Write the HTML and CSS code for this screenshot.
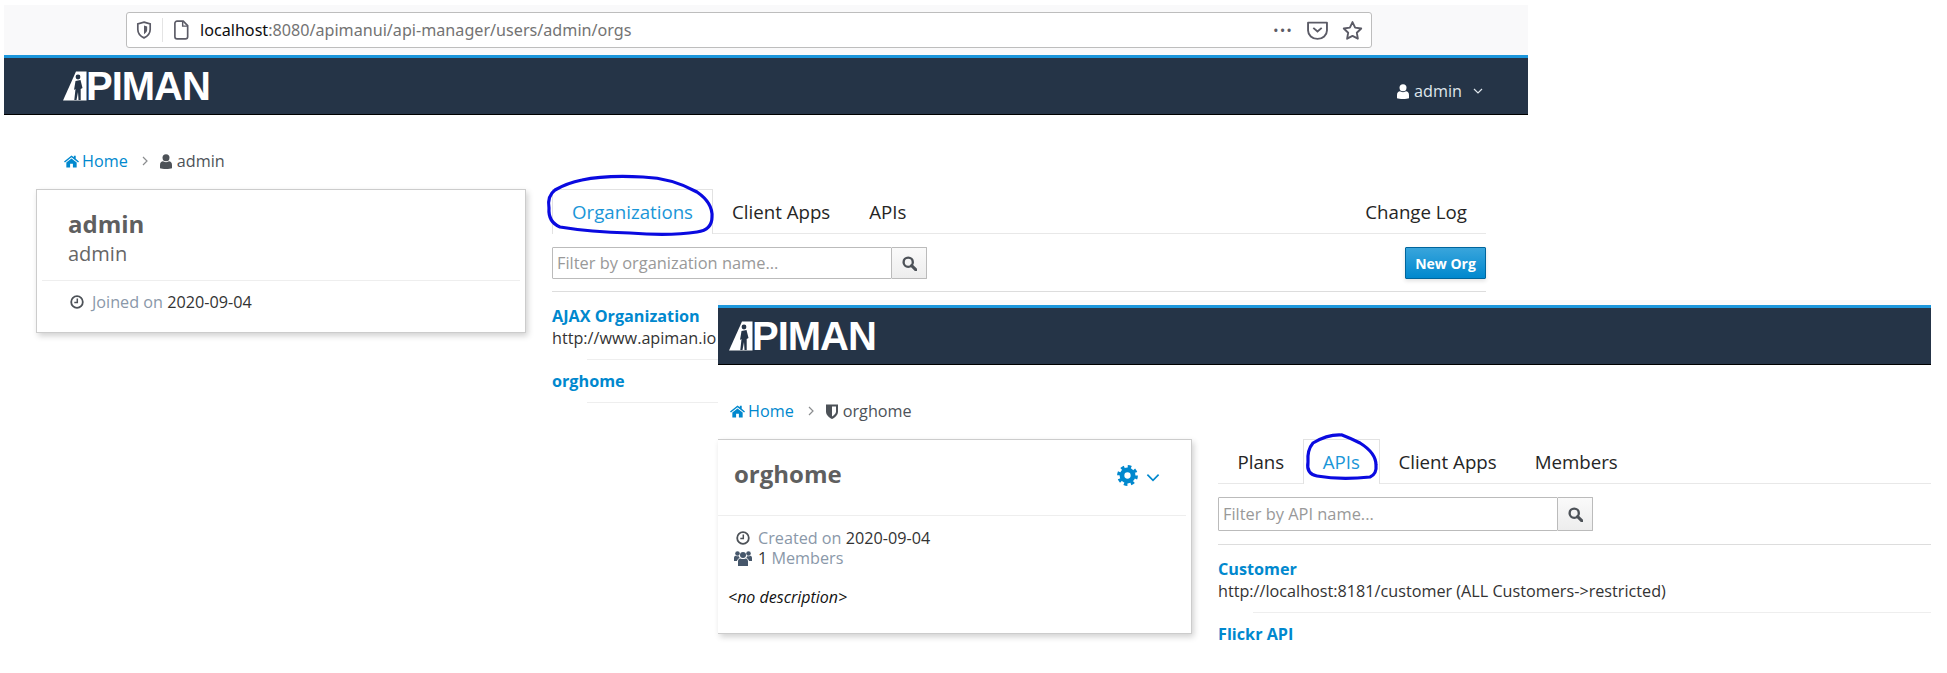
FILE: index.html
```html
<!DOCTYPE html>
<html lang="en">
<head>
  <meta charset="UTF-8" />
  <title>Apiman screenshots</title>
  <link rel="stylesheet" href="styles.css">
</head>
<body>

  <!-- icons -->
  <svg class="sprite" xmlns="http://www.w3.org/2000/svg">
    <symbol id="i-home" viewBox="0 0 16 14">
      <path d="M8 1L0 7.5l1 1.1L8 3l7 5.6 1-1.1-3.5-2.9V1.500h-2V3z"/>
      <path d="M2.500 8.700L8 4.200l5.500 4.500V14h-4v-4h-3v4h-4z"/>
    </symbol>
    <symbol id="i-user" viewBox="0 0 12 15">
      <circle cx="6" cy="3.700" r="3.500"/>
      <path d="M0 14.200V11c0-2.500 1.500-3.700 3-3.700 1 1.100 5 1.100 6 0 1.500 0 3 1.200 3 3.700v3.200c-2 1-10 1-12 0z"/>
    </symbol>
    <symbol id="i-clock" viewBox="0 0 14 14">
      <circle cx="7" cy="7" r="5.800" fill="none" stroke="currentColor" stroke-width="1.800"/>
      <path d="M7.300 3.500v4H4.300" fill="none" stroke="currentColor" stroke-width="1.500"/>
    </symbol>
    <symbol id="i-search" viewBox="0 0 14 14">
      <circle cx="5.800" cy="5.800" r="4.300" fill="none" stroke="currentColor" stroke-width="2.200"/>
      <path d="M9 9l4 4" fill="none" stroke="currentColor" stroke-width="2.800" stroke-linecap="round"/>
    </symbol>
    <symbol id="i-gear" viewBox="0 0 22 22">
      <circle cx="11" cy="11" r="5.800" fill="none" stroke="currentColor" stroke-width="5"/>
      <circle cx="11" cy="11" r="9.300" fill="none" stroke="currentColor" stroke-width="3.200" stroke-dasharray="3.700 3.600"/>
    </symbol>
    <symbol id="i-users" viewBox="0 0 18 16">
      <circle cx="9" cy="5" r="3"/>
      <circle cx="3.500" cy="3.500" r="2.300"/>
      <circle cx="14.500" cy="3.500" r="2.300"/>
      <path d="M4 16v-4.500C4 9.500 5 8.500 6.500 8.500c1 .8 4 .8 5 0 1.500 0 2.500 1 2.500 3V16z"/>
      <path d="M0 11V8c0-1.500 1-2.300 1.800-2.300.9.700 2.400.7 3 .4 0 .9.400 1.300 1 1.800C4 8.500 3 10 3 11z"/>
      <path d="M18 11V8c0-1.500-1-2.300-1.800-2.300-.9.700-2.400.7-3 .4 0 .9-.4 1.300-1 1.800C14 8.500 15 10 15 11z"/>
    </symbol>
    <symbol id="i-org" viewBox="0 0 12 15">
      <path d="M0 .5h12v7c0 3.500-3 6-6 7.500-3-1.500-6-4-6-7.500z"/>
      <path d="M6 2.500h4v5c0 2.200-2 3.800-4 5z" fill="#fff"/>
    </symbol>
    <symbol id="i-down" viewBox="0 0 10 6">
      <path d="M1 1l4 4 4-4" fill="none" stroke="currentColor" stroke-width="1.200"/>
    </symbol>
    <symbol id="i-right" viewBox="0 0 6 10">
      <path d="M1 1l4 4-4 4" fill="none" stroke="currentColor" stroke-width="1.200"/>
    </symbol>
    <symbol id="i-wedge" viewBox="0 0 24 30">
      <path d="M0 29.500L13 .5h10.500v29z" fill="#fff"/>
      <circle cx="15" cy="6" r="2.400" fill="#253447"/>
      <path d="M12.500 10l5-1 2 8-1.800 1v11h-2.200l-.5-8-1.500 8h-2.200l1.200-11-1.500 1z" fill="#253447"/>
    </symbol>
  </svg>

  <div class="canvas">

    <!-- first screenshot: user page -->
    <section class="shot shot-user">
      <div class="browser-bar">
        <div class="url-box">
          <svg class="url-shield" viewBox="0 0 14 16"><path d="M7 1l5.500 1.500v5c0 3.500-2.500 6-5.500 7.500-3-1.500-5.500-4-5.500-7.500v-5z" fill="none" stroke="#5b5b66" stroke-width="1.500"/><path d="M7 4l2.800.8v3c0 1.800-1.300 3-2.800 4z" fill="#5b5b66"/></svg>
          <span class="url-sep"></span>
          <svg class="url-page" viewBox="0 0 14 18"><path d="M1.500 3a2 2 0 012-2H9l4 4v10a2 2 0 01-2 2H3.500a2 2 0 01-2-2z" fill="none" stroke="#5b5b66" stroke-width="1.500"/><path d="M8.500 1v4.500H13" fill="none" stroke="#5b5b66" stroke-width="1.300"/></svg>
          <span class="url-text"><b>localhost</b>:8080/apimanui/api-manager/users/admin/orgs</span>
          <span class="url-dots">•••</span>
          <svg class="url-pocket" viewBox="0 0 20 18"><path d="M1 1.500h18v7.500a9 8 0 01-18 0z" fill="none" stroke="#5b5b66" stroke-width="1.800" stroke-linejoin="round"/><path d="M6 6.500l4 3.500 4-3.500" fill="none" stroke="#5b5b66" stroke-width="1.800"/></svg>
          <svg class="url-star" viewBox="0 0 20 20"><path d="M10 2l2.500 5.300 5.800.8-4.200 4 1 5.700-5.100-2.700-5.100 2.700 1-5.700-4.200-4 5.800-.8z" fill="none" stroke="#5b5b66" stroke-width="1.800" stroke-linejoin="round"/></svg>
        </div>
      </div>
      <nav class="navbar">
        <div class="logo"><svg class="logo-wedge"><use href="#i-wedge"/></svg><span>PIMAN</span></div>
        <div class="nav-user">
          <svg class="ico ico-user"><use href="#i-user"/></svg>
          <span>admin</span>
          <svg class="ico ico-down"><use href="#i-down"/></svg>
        </div>
      </nav>
      <div class="crumbs">
        <a class="crumb-link"><svg class="ico ico-home"><use href="#i-home"/></svg>Home</a>
        <svg class="ico ico-right"><use href="#i-right"/></svg>
        <span class="crumb-here"><svg class="ico ico-user"><use href="#i-user"/></svg>admin</span>
      </div>
      <div class="main">
        <aside class="card">
          <div class="card-head">
            <h2>admin</h2>
            <p class="card-sub">admin</p>
          </div>
          <div class="card-meta">
            <div class="meta-line"><svg class="ico ico-clock"><use href="#i-clock"/></svg><span class="muted">Joined on</span> 2020-09-04</div>
          </div>
        </aside>
        <div class="content">
          <ul class="tabs">
            <li class="tab active">Organizations</li>
            <li class="tab">Client Apps</li>
            <li class="tab">APIs</li>
            <li class="tab tab-end">Change Log</li>
          </ul>
          <div class="filter-row">
            <input class="filter-input" type="text" placeholder="Filter by organization name..." />
            <button class="filter-btn"><svg class="ico ico-search"><use href="#i-search"/></svg></button>
            <button class="btn-new">New Org</button>
          </div>
          <div class="item">
            <a class="item-name">AJAX Organization</a>
            <div class="item-desc">http://www.apiman.io</div>
          </div>
          <div class="item-line"></div>
          <div class="item">
            <a class="item-name">orghome</a>
          </div>
          <div class="item-line"></div>
        </div>
      </div>
    </section>

    <!-- second screenshot: organization page, pasted over the first -->
    <section class="shot shot-org">
      <div class="browser-bar"></div>
      <nav class="navbar">
        <div class="logo"><svg class="logo-wedge"><use href="#i-wedge"/></svg><span>PIMAN</span></div>
      </nav>
      <div class="crumbs">
        <a class="crumb-link"><svg class="ico ico-home"><use href="#i-home"/></svg>Home</a>
        <svg class="ico ico-right"><use href="#i-right"/></svg>
        <span class="crumb-here"><svg class="ico ico-org"><use href="#i-org"/></svg>orghome</span>
      </div>
      <div class="main">
        <aside class="card">
          <div class="card-head">
            <h2>orghome</h2>
            <div class="card-actions">
              <svg class="ico ico-gear"><use href="#i-gear"/></svg>
              <svg class="ico ico-chev"><use href="#i-down"/></svg>
            </div>
          </div>
          <div class="card-meta">
            <div class="meta-line"><svg class="ico ico-clock"><use href="#i-clock"/></svg><span class="muted">Created on</span> 2020-09-04</div>
            <div class="meta-line"><svg class="ico ico-users"><use href="#i-users"/></svg>1 <span class="muted">Members</span></div>
          </div>
          <p class="no-desc">&lt;no description&gt;</p>
        </aside>
        <div class="content">
          <ul class="tabs">
            <li class="tab">Plans</li>
            <li class="tab active">APIs</li>
            <li class="tab">Client Apps</li>
            <li class="tab">Members</li>
          </ul>
          <div class="filter-row">
            <input class="filter-input" type="text" placeholder="Filter by API name..." />
            <button class="filter-btn"><svg class="ico ico-search"><use href="#i-search"/></svg></button>
          </div>
          <div class="item">
            <a class="item-name">Customer</a>
            <div class="item-desc">http://localhost:8181/customer (ALL Customers-&gt;restricted)</div>
          </div>
          <div class="item-line"></div>
          <div class="item">
            <a class="item-name">Flickr API</a>
          </div>
        </div>
      </div>
    </section>

    <!-- hand drawn circles -->
    <svg class="scribbles" viewBox="0 0 1947 673">
      <path d="M582 180Q567 183 555 190Q547 196 549 208Q548 222 560 227Q590 232 630 233Q670 236 697 232Q712 230 712 217Q713 203 697 192Q672 178 643 177Q605 175 582 180"/>
      <path d="M1342 435Q1328 434 1313 443Q1307 450 1308 462Q1306 474 1317 476Q1340 480 1370 477Q1377 474 1376 465Q1376 453 1360 443Q1350 438 1342 435"/>
    </svg>

  </div>
</body>
</html>
```

FILE: styles.css
```css
* {
  margin: 0;
  padding: 0;
  box-sizing: border-box;
}

body {
  background: #fff;
  font-family: "Open Sans", sans-serif;
  font-size: 16.2px;
  line-height: 22px;
  color: #333;
  overflow: hidden;
}

.sprite {
  display: none;
}

.canvas {
  position: relative;
  width: 1947px;
  height: 673px;
  overflow: hidden;
}

.ico {
  fill: currentColor;
  flex: none;
}

/* the two pasted screenshots */
.shot {
  position: absolute;
  background: #fff;
}

.shot-user {
  left: 4px;
  top: 5px;
  width: 1524px;
}

.shot-org {
  left: 718px;
  top: 300px;
  width: 1213px;
  height: 373px;
}

.browser-bar {
  height: 50px;
  padding: 7px 0 0 122px;
  background: #f9f9fa;
}

.shot-org .browser-bar {
  height: 5px;
  padding: 0;
}

.url-box {
  display: flex;
  align-items: center;
  width: 1246px;
  height: 36px;
  padding: 0 8px 0 9px;
  background: #fff;
  border: 1px solid #bdbdbd;
  border-radius: 3px;
}

.url-shield {
  width: 16px;
  height: 18px;
}

.url-sep {
  width: 1px;
  height: 24px;
  margin: 0 10px 0 10px;
  background: #e4e4e4;
}

.url-page {
  width: 16px;
  height: 20px;
  margin-right: 11px;
}

.url-text {
  font-family: "Noto Sans", sans-serif;
  font-size: 16.15px;
  color: #737373;
}

.url-text b {
  font-weight: 400;
  color: #0c0c0d;
}

.url-dots {
  margin-left: auto;
  font-size: 15px;
  letter-spacing: 1px;
  color: #5b5b66;
}

.url-pocket {
  width: 21px;
  height: 19px;
  margin-left: 14px;
}

.url-star {
  width: 21px;
  height: 21px;
  margin-left: 14px;
}

.navbar {
  display: flex;
  align-items: center;
  justify-content: space-between;
  height: 60px;
  padding: 0 45px 0 59px;
  background: #253447;
  border-top: 3px solid #1b96dc;
  border-bottom: 1px solid #000;
}

.shot-org .navbar {
  padding-left: 11px;
}

.logo {
  display: flex;
  align-items: center;
  color: #fff;
  font-family: "Liberation Sans", sans-serif;
  font-size: 40px;
  font-weight: 700;
  line-height: 30px;
  letter-spacing: -1px;
}

.logo-wedge {
  width: 24px;
  height: 30px;
  margin-right: -1px;
}

.nav-user {
  display: flex;
  align-items: center;
  margin-top: 10px;
  color: #dfe6ec;
}

.nav-user .ico-user {
  margin-right: 5px;
  color: #fff;
}

.nav-user .ico-down {
  width: 10px;
  height: 6px;
  margin-left: 11px;
}

.crumbs {
  display: flex;
  align-items: center;
  height: 22px;
  margin: 35px 0 17px;
  padding-left: 60px;
}

.shot-org .crumbs {
  padding-left: 12px;
}

.crumb-link {
  display: flex;
  align-items: center;
  color: #0088ce;
}

.ico-home {
  width: 15px;
  height: 14px;
  margin-right: 3px;
}

.ico-right {
  width: 6px;
  height: 10px;
  margin: 0 12px 0 14px;
  color: #8b8d8f;
}

.crumb-here {
  display: flex;
  align-items: center;
  color: #4d5258;
}

.ico-user,
.ico-org {
  width: 12px;
  height: 15px;
  margin-right: 5px;
}

.main {
  display: grid;
  grid-template-columns: 490px 934px;
  column-gap: 26px;
  padding-left: 32px;
}

.shot-org .main {
  grid-template-columns: 474px 1fr;
  padding-left: 0;
}

.card {
  height: 144px;
  padding: 0 5px;
  background: #fff;
  border: 1px solid #ccc;
  box-shadow: 2px 3px 6px rgba(0, 0, 0, 0.18);
}

.shot-org .card {
  height: 195px;
  padding-left: 0;
  border-left: none;
}

.card-head {
  padding: 19px 0 12px 26px;
  border-bottom: 1px solid #eee;
}

.shot-org .card-head {
  display: flex;
  justify-content: space-between;
  height: 76px;
  padding: 19px 26px 0 16px;
}

h2 {
  font-size: 24px;
  line-height: 30px;
  font-weight: 700;
  color: #5f5f5f;
}

.card-sub {
  font-size: 20px;
  line-height: 28px;
  margin-top: 1px;
  color: #666;
}

.card-actions {
  display: flex;
  align-items: center;
  height: 32px;
}

.ico-gear {
  width: 21px;
  height: 21px;
  color: #0088ce;
}

.ico-chev {
  width: 14px;
  height: 9px;
  margin: 4px 0 0 8px;
  color: #0088ce;
}

.card-meta {
  padding: 10px 0 0 28px;
}

.shot-org .card-meta {
  padding: 12px 0 0 18px;
}

.meta-line {
  display: flex;
  align-items: center;
  white-space: pre;
}

.shot-org .meta-line {
  line-height: 20px;
}

.muted {
  color: #8a98a9;
}

.ico-clock {
  width: 14px;
  height: 14px;
  margin-right: 8px;
  color: #4d5258;
}

.ico-users {
  width: 18px;
  height: 16px;
  margin-left: -2px;
  margin-right: 6px;
  color: #46576b;
}

.no-desc {
  margin: 18px 0 0 10px;
  font-size: 16px;
  font-style: italic;
  color: #111;
}

.tabs {
  display: flex;
  height: 45px;
  list-style: none;
  border-bottom: 1px solid #e8e8e8;
}

.tab {
  height: 44px;
  padding: 0 20px;
  margin-right: -1px;
  font-size: 18.7px;
  line-height: 45px;
  color: #252525;
}

.shot-org .tab {
  padding: 0 19.500px;
}

.tab.active,
.shot-org .tab.active {
  height: 45px;
  padding: 0 19px;
  line-height: 43px;
  color: #1a96d8;
  background: #fff;
  border: 1px solid #e2e2e2;
  border-bottom: none;
}

.tab-end {
  margin-left: auto;
}

.filter-row {
  display: flex;
  align-items: flex-start;
  margin-top: 13px;
  padding-bottom: 12px;
  border-bottom: 1px solid #ddd;
}

.shot-org .filter-row {
  padding-bottom: 13px;
}

.filter-input {
  width: 340px;
  height: 32px;
  padding: 0 4px 1px;
  font-family: "Open Sans", sans-serif;
  font-size: 16.4px;
  border: 1px solid #bbb;
  border-radius: 1px;
}

.filter-input::placeholder {
  color: #999;
}

.filter-btn {
  display: flex;
  align-items: center;
  justify-content: center;
  width: 35px;
  height: 32px;
  color: #4d5258;
  background: linear-gradient(#fafafa, #ededed);
  border: 1px solid #bbb;
  border-left: none;
  border-radius: 0 1px 1px 0;
}

.shot-org .filter-input,
.shot-org .filter-btn {
  height: 34px;
}

.ico-search {
  width: 15px;
  height: 15px;
}

.btn-new {
  width: 81px;
  height: 32px;
  margin-left: auto;
  font-family: "Open Sans", sans-serif;
  font-size: 14px;
  font-weight: 700;
  color: #fff;
  background: linear-gradient(#39a5dc, #0088ce);
  border: 1px solid #00659c;
  border-radius: 1px;
  box-shadow: 0 2px 4px rgba(0, 0, 0, 0.12);
}

.item {
  padding: 13px 0 10px;
}

.item-line + .item {
  padding-top: 10px;
}

.item-name {
  display: block;
  font-weight: 700;
  color: #0088ce;
}

.item-desc {
  white-space: nowrap;
  color: #333;
}

.item-line {
  height: 1px;
  margin-left: 35px;
  background: #eee;
}

.scribbles {
  position: absolute;
  left: 0;
  top: 0;
  width: 1947px;
  height: 673px;
  pointer-events: none;
  fill: none;
  stroke: #0a0ae0;
  stroke-width: 3.2;
  stroke-linecap: round;
}
```
